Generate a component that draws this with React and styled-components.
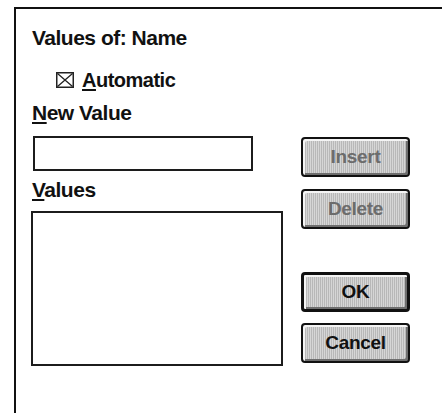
import React from "react";
import styled, { createGlobalStyle } from "styled-components";

const GlobalStyle = createGlobalStyle`
  html, body {
    margin: 0;
    padding: 0;
    background: #fff;
  }
  body {
    font-family: "Liberation Sans", Arial, sans-serif;
    color: #111;
  }
`;

const Frame = styled.div`
  box-sizing: border-box;
  margin: 7px 0 0 14px;
  height: 406px;
  border-top: 2px solid #111;
  border-left: 2px solid #111;
  padding: 18px 0 0 16px;
  display: flex;
  flex-direction: column;
`;

const Title = styled.div`
  font-size: 21px;
  line-height: 22px;
  font-weight: bold;
  letter-spacing: -0.5px;
`;

const Label = styled.div`
  font-size: ${(p) => p.$size || 21}px;
  line-height: 20px;
  font-weight: bold;
  letter-spacing: -0.5px;
  margin-top: ${(p) => p.$top || 0}px;

  u {
    text-decoration-thickness: 2px;
    text-underline-offset: 2px;
  }
`;

const CheckRow = styled.label`
  display: flex;
  align-items: flex-start;
  gap: 8px;
  margin-top: 21px;
  padding-left: 24px;
  height: 20px;
`;

const CheckBox = styled.svg`
  flex: none;
  margin-top: 2px;
`;

const Body = styled.div`
  display: flex;
  gap: 17px;
  margin-top: 13px;
`;

const LeftColumn = styled.div`
  display: flex;
  flex-direction: column;
  width: 252px;
`;

const TextBox = styled.div`
  box-sizing: border-box;
  width: 220px;
  height: 35px;
  margin-left: 1px;
  border: 2px solid #1c1c1c;
  background: #fff;
`;

const ListBox = styled.div`
  box-sizing: border-box;
  width: 252px;
  height: 155px;
  margin: 11px 0 0 -1px;
  border: 2px solid #1c1c1c;
  background: #fff;
`;

const ButtonColumn = styled.div`
  display: flex;
  flex-direction: column;
`;

const Button = styled.button`
  box-sizing: border-box;
  width: 109px;
  height: 40px;
  padding: 0;
  margin-top: ${(p) => p.$top}px;
  border: ${(p) => (p.$isDefault ? "3px" : "2px")} solid #111;
  border-radius: 4px;
  background-color: #cdcdcd;
  background-image: repeating-linear-gradient(
    90deg,
    rgba(0, 0, 0, 0.1) 0 1px,
    rgba(255, 255, 255, 0.18) 1px 2px
  );
  box-shadow: inset 2px 2px 0 #f4f4f4, inset -2px -2px 0 #6e6e6e;
  font-family: "Liberation Sans", Arial, sans-serif;
  font-size: 19px;
  font-weight: bold;
  letter-spacing: -0.3px;
  color: ${(p) => (p.disabled ? "#6c6c6c" : "#111")};
`;

export default function App() {
  return (
    <>
      <GlobalStyle />
      <Frame>
        <Title>Values of: Name</Title>
        <CheckRow>
          <CheckBox width="18" height="16" viewBox="0 0 18 16">
            <rect x="0.75" y="0.75" width="16.5" height="14.5" fill="#fff" stroke="#222" strokeWidth="1.5" />
            <path d="M1.5 1.5 L16.5 14.5 M16.5 1.5 L1.5 14.5" stroke="#222" strokeWidth="1.3" />
          </CheckBox>
          <Label $size={20}>
            <u>A</u>utomatic
          </Label>
        </CheckRow>
        <Label $top={13}>
          <u>N</u>ew Value
        </Label>
        <Body>
          <LeftColumn>
            <TextBox />
            <Label $top={9}>
              <u>V</u>alues
            </Label>
            <ListBox />
          </LeftColumn>
          <ButtonColumn>
            <Button $top={1} disabled>
              Insert
            </Button>
            <Button $top={12} disabled>
              Delete
            </Button>
            <Button $top={43} $isDefault>
              OK
            </Button>
            <Button $top={11}>Cancel</Button>
          </ButtonColumn>
        </Body>
      </Frame>
    </>
  );
}
